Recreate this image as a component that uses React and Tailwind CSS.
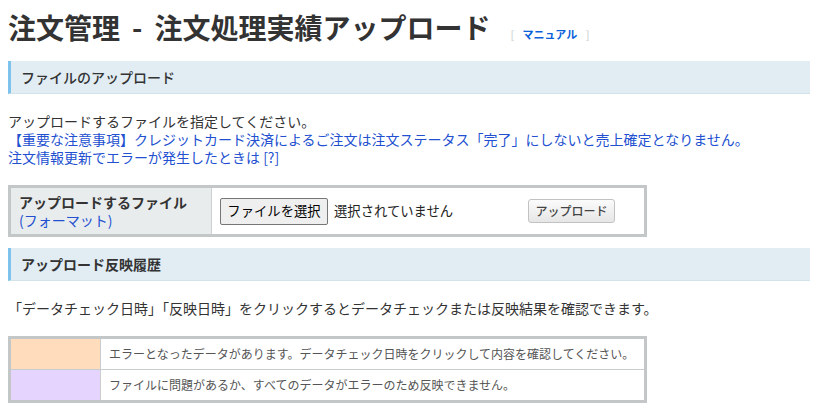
const jp = { fontFamily: '"Noto Sans CJK JP", "Noto Sans", sans-serif' };

function SectionHeader({ children, bold }) {
  return (
    <div className="flex h-[33px] items-center border-b border-l-[3px] border-b-[#d2e4ea] border-l-[#7ec2ee] bg-[#e1edf3] pl-[10px]">
      <h2 className={`text-[14px] leading-none text-[#333] ${bold ? 'font-bold' : 'font-medium'}`}>{children}</h2>
    </div>
  );
}

export default function App() {
  return (
    <div className="w-[818px] bg-white px-2 text-[#333]" style={jp}>
      <div className="flex items-baseline pt-2">
        <h1 className="text-[28px] font-bold leading-[39px] text-[#333]">
          注文管理<span className="mx-[12px]">-</span>注文処理実績アップロード
        </h1>
        <span className="ml-[20px] text-[11px] text-[#c8cccc]">
          [ <a href="#" className="mx-[6px] font-bold text-[#0b5fd9]">マニュアル</a> ]
        </span>
      </div>

      <div className="mt-[14px]">
        <SectionHeader>ファイルのアップロード</SectionHeader>
      </div>

      <div className="mt-[18px] text-[14px] leading-[18px]">
        <p>アップロードするファイルを指定してください。</p>
        <p className="text-[#2250d0]">【重要な注意事項】クレジットカード決済によるご注文は注文ステータス「完了」にしないと売上確定となりません。</p>
        <p className="text-[#2250d0]">
          注文情報更新でエラーが発生したときは <a href="#">[?]</a>
        </p>
      </div>

      <div className="mt-[19px] flex w-[639px] border-[3px] border-[#c3c7c7]">
        <div className="flex h-[46px] w-[201px] flex-col justify-center border-r border-[#cdd1d1] bg-[#e9eced] px-2 text-[14px] leading-[18px]">
          <span className="font-bold text-[#333]">アップロードするファイル</span>
          <a href="#" className="text-[#2250d0]">(フォーマット)</a>
        </div>
        <div className="flex flex-1 items-center pl-2 text-[13.33px]">
          <button
            type="button"
            className="h-[27px] w-[108px] rounded-[2px] border border-[#767676] bg-[#efefef] text-[13.33px] text-black"
          >
            ファイルを選択
          </button>
          <span className="ml-[6px] w-[194px] text-[#222]">選択されていません</span>
          <button
            type="button"
            className="h-[24px] w-[87px] rounded-[3px] border border-[#c2c2c2] bg-gradient-to-b from-[#fbfbfb] to-[#e6e6e6] text-[12px] font-medium text-[#444]"
          >
            アップロード
          </button>
        </div>
      </div>

      <div className="mt-[11px]">
        <SectionHeader bold>アップロード反映履歴</SectionHeader>
      </div>

      <p className="mt-[18px] text-[14px] leading-[18px]">
        「データチェック日時」「反映日時」をクリックするとデータチェックまたは反映結果を確認できます。
      </p>

      <div className="mt-[19px] w-[639px] border-[3px] border-[#c3c7c7] text-[12px] text-[#555]">
        <div className="flex h-[31px] border-b border-[#c9cdcd]">
          <div className="w-[90px] border-r border-[#c9cdcd] bg-[#ffdcbc]" />
          <div className="flex items-center pl-2">エラーとなったデータがあります。データチェック日時をクリックして内容を確認してください。</div>
        </div>
        <div className="flex h-[30px]">
          <div className="w-[90px] border-r border-[#c9cdcd] bg-[#e5d4fd]" />
          <div className="flex items-center pl-2">ファイルに問題があるか、すべてのデータがエラーのため反映できません。</div>
        </div>
      </div>
    </div>
  );
}
